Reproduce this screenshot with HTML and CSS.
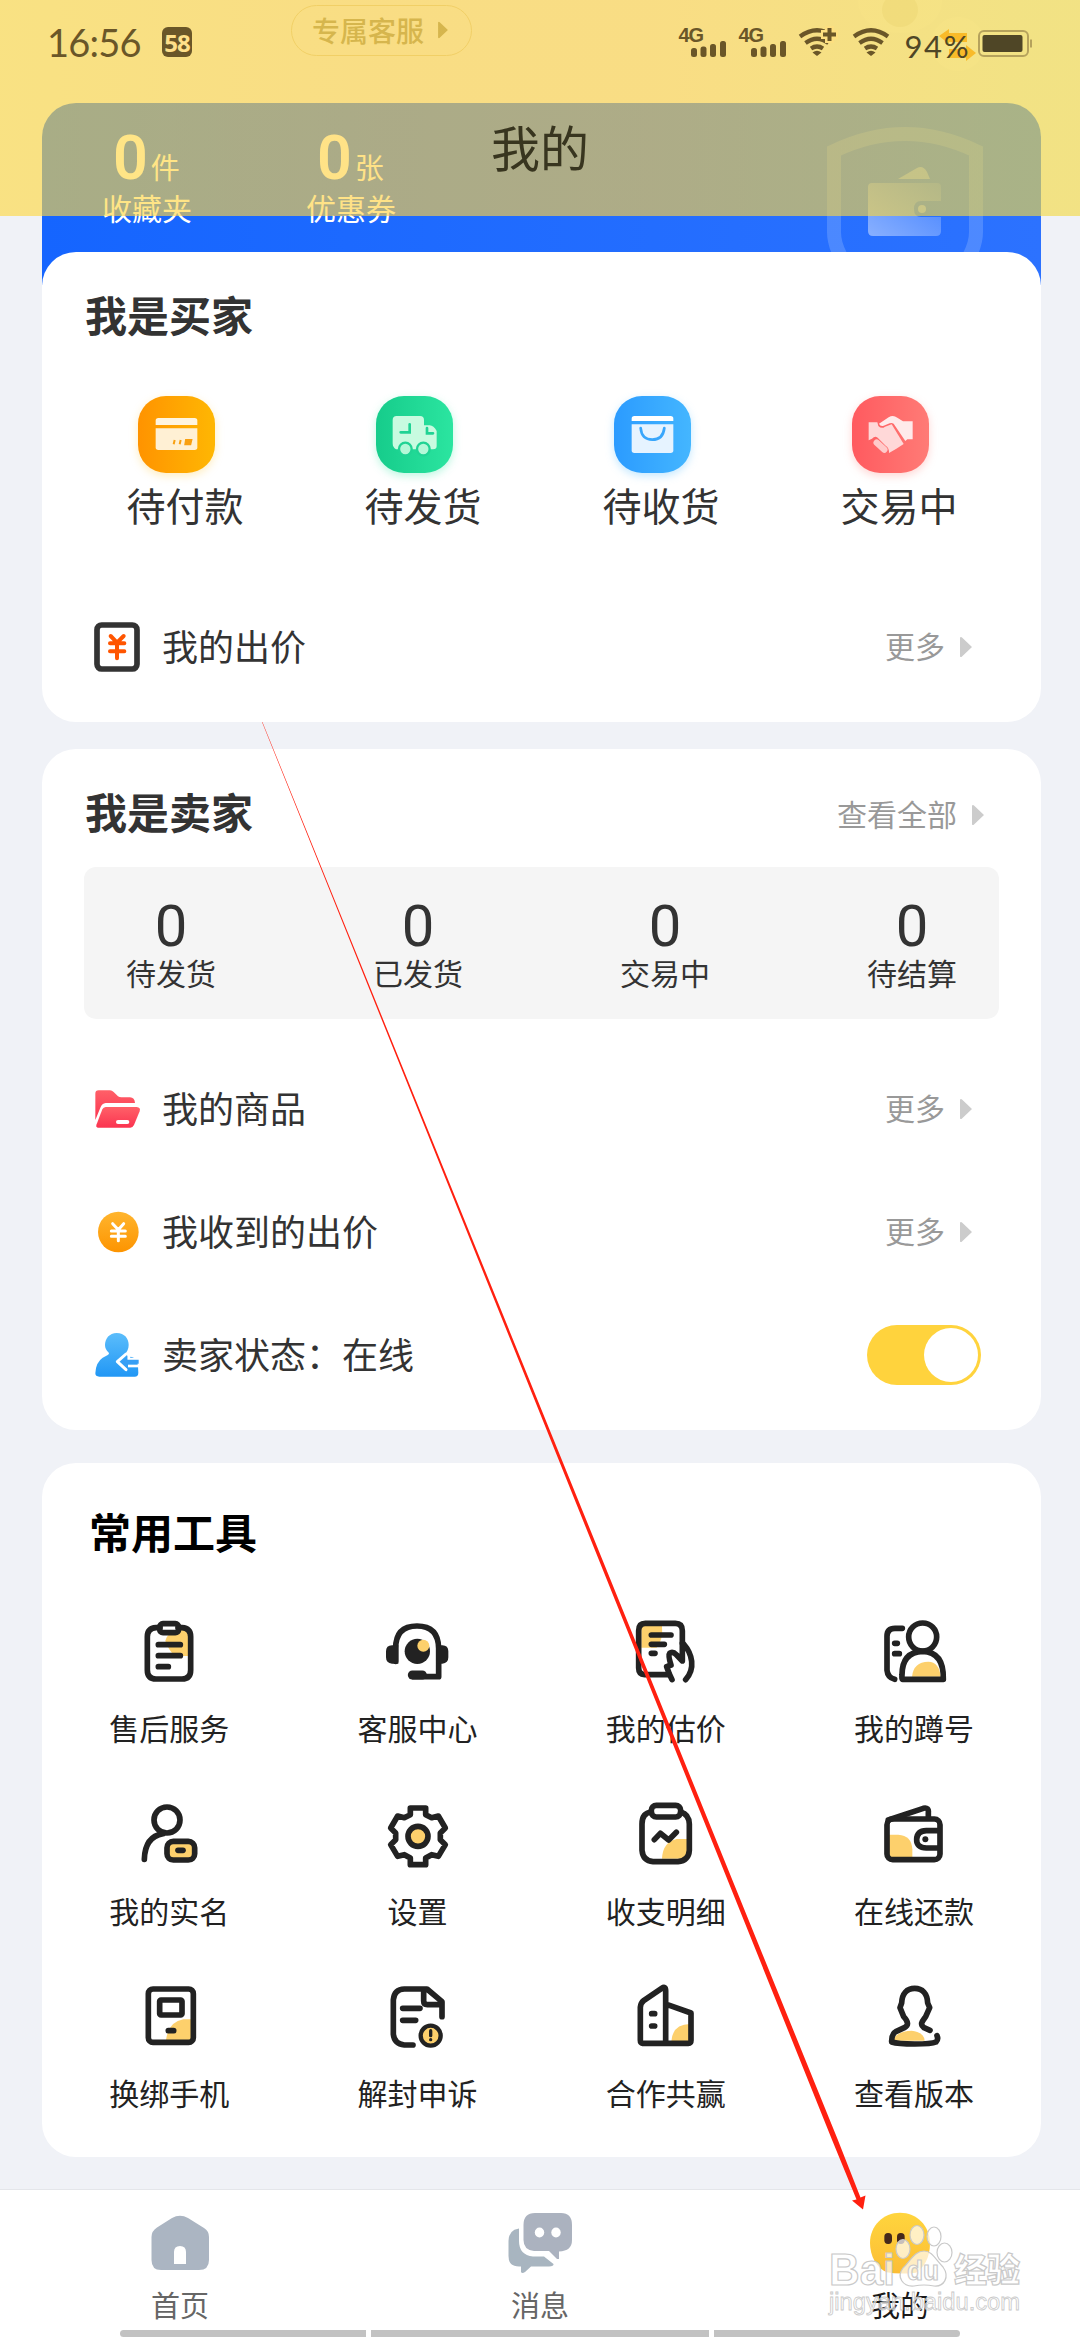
FILE: index.html
```html
<!DOCTYPE html>
<html lang="zh-CN">
<head>
<meta charset="utf-8">
<title>我的</title>
<link rel="stylesheet" href="styles.css">
</head>
<body>
<svg class="defs" width="0" height="0">
  <defs>
    <linearGradient id="gOrange"><stop offset="0" stop-color="#ff9300"/><stop offset="1" stop-color="#ffb703"/></linearGradient>
    <linearGradient id="gGreen"><stop offset="0" stop-color="#16cc8b"/><stop offset="1" stop-color="#2be5a0"/></linearGradient>
    <linearGradient id="gBlue"><stop offset="0" stop-color="#2b9bff"/><stop offset="1" stop-color="#44b6ff"/></linearGradient>
    <linearGradient id="gRed"><stop offset="0" stop-color="#ff5a5f"/><stop offset="1" stop-color="#ff7b76"/></linearGradient>
    <linearGradient id="gFolder" x2="0" y2="1"><stop offset="0" stop-color="#ff6068"/><stop offset="1" stop-color="#fb3450"/></linearGradient>
    <linearGradient id="gCoin" x2="0" y2="1"><stop offset="0" stop-color="#ffb52e"/><stop offset="1" stop-color="#fd9400"/></linearGradient>
    <linearGradient id="gUser" x2="0" y2="1"><stop offset="0" stop-color="#5bbdfb"/><stop offset="1" stop-color="#2197f5"/></linearGradient>
    <linearGradient id="gFace" x2="0" y2="1"><stop offset="0" stop-color="#ffd53d"/><stop offset="1" stop-color="#fcbd35"/></linearGradient>
    <linearGradient id="gPlate" x1="0" y1="1" x2="1" y2="0"><stop offset="0" stop-color="#fff" stop-opacity=".45"/><stop offset="1" stop-color="#fff" stop-opacity=".12"/></linearGradient>
    <symbol id="next" viewBox="0 0 12 22"><path d="M0 1.500V20.500Q1 21.500 2 20.500L12 11 2 1.500Q1 .5 0 1.500Z" fill="currentColor"/></symbol>
  </defs>
</svg>

<div class="content">
  <div class="service-strip">
    <div class="pill">专属客服<svg class="next"><use href="#next"/></svg></div>
    <svg class="mascot" width="150" height="80" viewBox="0 0 150 80">
      <ellipse cx="51" cy="2" rx="42" ry="31" fill="#fff" opacity=".3"/>
      <ellipse cx="51" cy="10" rx="18" ry="17" fill="#cfc9b4" opacity=".35"/>
      <circle cx="109" cy="44" r="27" fill="#fff" opacity=".35"/>
      <path d="M90 36L100 29V33H118V42H100V44ZM127 53L117 45V49H100V58H117V61Z" fill="#ff8a00"/>
    </svg>
  </div>

  <section class="assets">
    <div class="asset"><p><b>0</b>件</p><span>收藏夹</span></div>
    <div class="asset"><p><b>0</b>张</p><span>优惠券</span></div>
    <svg class="shield" width="160" height="150" viewBox="823 103 160 150">
      <path d="M843 262Q833 246 833 232V151Q904 117 975 151V232Q975 246 965 262" fill="none" stroke="#8fb6ff" stroke-opacity=".35" stroke-width="14"/>
      <path d="M897 179L916 168Q922 165 926 172L929 179Z" fill="#fff" opacity=".35"/>
      <path d="M871 183H936Q940 183 940 187V201H920Q913 201 913 209T920 217H940V231Q940 236 935 236H872Q867 236 867 231V187Q867 183 871 183Z" fill="url(#gPlate)"/>
      <circle cx="921" cy="209" r="4" fill="#fff" opacity=".4"/>
    </svg>
  </section>

  <section class="card buyer">
    <h2>我是买家</h2>
    <div class="orders">
      <div class="order">
        <svg class="o-orange" viewBox="291 78 231 231"><rect x="291" y="78" width="231" height="231" rx="84" fill="url(#gOrange)"/><path d="M344 165V152Q344 144 352 144H461Q469 144 469 152V165Z" fill="#fff4df"/><path d="M344 175H469V232Q469 240 461 240H352Q344 240 344 232Z" fill="#fff0d4"/><path d="M401 210L398 223M419 210L416 223M435 210H451L448 223H433Z" stroke="#f9a010" stroke-width="6" fill="#f9a010"/></svg>
        <span>待付款</span>
      </div>
      <div class="order">
        <svg class="o-green" viewBox="1005 78 231 231"><rect x="1005" y="78" width="231" height="231" rx="84" fill="url(#gGreen)"/><path d="M1067 138H1137Q1149 138 1149 150V166H1166Q1178 167 1187 183V228Q1187 238 1176 238H1065Q1055 232 1055 220V150Q1055 138 1067 138Z" fill="#c8fbe0"/><path d="M1106 163V187H1079M1158 174V190H1176" stroke="#20d394" stroke-width="8" fill="none" stroke-linecap="round"/><circle cx="1093" cy="237" r="19" fill="#b4f8d8" stroke="#20d394" stroke-width="7"/><circle cx="1147" cy="237" r="19" fill="#b4f8d8" stroke="#20d394" stroke-width="7"/></svg>
        <span>待发货</span>
      </div>
      <div class="order">
        <svg class="o-blue" viewBox="219 78 231 231"><rect x="219" y="78" width="231" height="231" rx="84" fill="url(#gBlue)"/><path d="M272 153V146Q272 138 280 138H389Q397 138 397 146V153Z" fill="#fff"/><path d="M272 163H397V241Q397 249 389 249H280Q272 249 272 241Z" fill="#e6f3ff"/><path d="M299 174Q302 209 334 209T370 174" stroke="#38a6fc" stroke-width="8" fill="none" stroke-linecap="round"/></svg>
        <span>待收货</span>
      </div>
      <div class="order">
        <svg class="o-red" viewBox="933 78 231 231"><rect x="933" y="78" width="231" height="231" rx="84" fill="url(#gRed)"/><path d="M983 157H1009L1012 168Q1022 178 1032 170L1052 163L1088 222Q1066 237 1044 249Q1045 234 1034 227L1010 203Q1002 196 993 206L983 211Z" fill="#ffd8d8"/><path d="M1014 161L1043 142Q1056 134 1069 143L1086 154H1115V208H1099L1093 213L1058 161Q1052 157 1046 160L1028 167Q1018 170 1014 161Z" fill="#ffeaea"/><path d="M1007 218L1030 239" stroke="#ffcaca" stroke-width="19" stroke-linecap="round"/></svg>
        <span>交易中</span>
      </div>
    </div>
    <div class="row">
      <svg class="row-icon" viewBox="162 741 144 180"><rect x="171" y="765" width="120" height="132" rx="14" fill="none" stroke="#333" stroke-width="17"/><path d="M212 798L231 818 251 798M231 820V865M210 820H253M210 844H253" stroke="#ff5500" stroke-width="12" fill="none" stroke-linecap="round"/></svg>
      <span class="row-name">我的出价</span><span class="more">更多</span><svg class="next"><use href="#next"/></svg>
    </div>
  </section>

  <section class="card seller">
    <div class="head"><h2>我是卖家</h2><span class="more">查看全部</span><svg class="next"><use href="#next"/></svg></div>
    <div class="stats">
      <div><b>0</b><span>待发货</span></div>
      <div><b>0</b><span>已发货</span></div>
      <div><b>0</b><span>交易中</span></div>
      <div><b>0</b><span>待结算</span></div>
    </div>
    <div class="row">
      <svg class="row-icon" viewBox="102 57 144 180"><path d="M106 180V101Q106 91 116 91H150Q156 91 161 96L174 109Q178 112 184 112H210Q224 113 225 129H137Q126 131 122 141Z" fill="url(#gFolder)"/><path d="M137 141H230Q243 142 239 154L222 195Q218 203 211 203H113Q107 202 109 195L127 148Q130 142 137 141Z" fill="url(#gFolder)"/><rect x="168" y="180" width="40" height="12" rx="6" fill="#fff"/></svg>
      <span class="row-name">我的商品</span><span class="more">更多</span><svg class="next"><use href="#next"/></svg>
    </div>
    <div class="row">
      <svg class="row-icon" viewBox="102 426 144 180"><circle cx="175" cy="516" r="61" fill="url(#gCoin)"/><path d="M158 491L175 509 191 491M175 510V542M154 513H196M154 529H196" stroke="#fff" stroke-width="9" fill="none" stroke-linecap="round"/></svg>
      <span class="row-name">我收到的出价</span><span class="more">更多</span><svg class="next"><use href="#next"/></svg>
    </div>
    <div class="row">
      <svg class="row-icon" viewBox="102 795 144 180"><path d="M170 819C194 819 206 836 206 855C206 866 201 876 194 883C207 888 224 893 230 900Q235 915 235 938Q235 950 224 950H118Q106 950 106 940Q107 907 128 893L142 886Q150 882 145 877C139 871 135 864 135 855C135 836 148 819 170 819Z" fill="url(#gUser)"/><path d="M206 886L240 886V898H206ZM198 882L172 905 198 929" fill="none" stroke="#fff" stroke-width="9" stroke-linejoin="round" stroke-linecap="round"/><path d="M202 887L183 905 202 923V911H236V899H202Z" fill="#379ff5"/><path d="M204 918H238" stroke="#fff" stroke-width="8"/></svg>
      <span class="row-name">卖家状态：在线</span><span class="switch"><i></i></span>
    </div>
  </section>

  <section class="card tools">
    <h2>常用工具</h2>
    <div class="grid">
      <div class="tool">
        <svg viewBox="219 375 216 216"><path class="y" d="M385 498H345Q325 480 316 452Q320 430 352 420H385Z"/><path d="M300 413H288Q262 415 262 440V540Q262 567 288 567H366Q392 567 392 540V440Q392 415 366 413H354"/><rect x="299" y="401" width="57" height="27" rx="10"/><path d="M295 464H361M295 497H361M295 530H325"/></svg>
        <span>售后服务</span>
      </div>
      <div class="tool">
        <svg viewBox="964 375 216 216"><circle class="k" cx="1073" cy="484" r="38"/><circle class="y" cx="1091" cy="467" r="18"/><path d="M1008 514V475Q1008 408 1072 408T1137 475V560H1062"/><path class="k" d="M1016 466V521H997Q979 520 979 502V484Q979 466 997 466ZM1129 466V521H1148Q1166 520 1166 502V484Q1166 466 1148 466Z"/><path d="M1058 555H1088" stroke-width="27"/></svg>
        <span>客服中心</span>
      </div>
      <div class="tool">
        <svg viewBox="210 105 216 216"><path class="y" d="M244 137H306Q310 180 290 203H244Z"/><path d="M322 284H254Q236 283 236 264V152Q236 130 256 130H346Q367 130 367 152V190"/><path d="M274 165H333M274 193H313M274 220H285"/><path d="M367 190V243L350 225Q338 213 329 220Q324 226 333 255L320 260 328 282 336 299M371 192C397 222 407 265 377 299"/></svg>
        <span>我的估价</span>
      </div>
      <div class="tool">
        <svg viewBox="954 105 216 216"><path class="y" d="M1056 290Q1060 246 1105 245Q1138 246 1142 290Z"/><circle cx="1088" cy="171" r="42"/><path d="M1028 298H1150Q1152 216 1088 214Q1026 216 1026 285Q1025 298 1028 298ZM1027 145H1005Q981 145 981 169V271Q983 293 1004 298M1004 190H1012M1004 221H1018"/></svg>
        <span>我的蹲号</span>
      </div>
      <div class="tool">
        <svg viewBox="219 54 216 216"><circle cx="321" cy="120" r="39"/><path d="M253 238Q255 170 309 161"/><rect x="321" y="184" width="83" height="56" rx="19" fill="#fdd06c"/><path d="M354 211H369"/></svg>
        <span>我的实名</span>
      </div>
      <div class="tool">
        <svg viewBox="964 54 216 216"><path d="M1052 84H1098V104L1116 113L1136 108L1157 144L1142 159V179L1157 194L1136 229L1116 224L1098 234V254H1052V234L1034 224L1014 229L993 194L1008 179V159L993 144L1014 108L1034 113L1052 104Z"/><circle cx="1075" cy="169" r="30" fill="#fdd06c"/></svg>
        <span>设置</span>
      </div>
      <div class="tool">
        <svg viewBox="210 54 216 216"><path class="y" d="M306 236Q308 186 350 177H382V236Z"/><path d="M274 96Q246 99 246 132V211Q249 243 279 245H354Q386 242 388 211V132Q387 103 362 96"/><rect x="274" y="76" width="88" height="35" rx="15"/><path d="M283 179L301 160 326 180 349 157"/></svg>
        <span>收支明细</span>
      </div>
      <div class="tool">
        <svg viewBox="954 54 216 216"><path class="y" d="M986 164H1015Q1055 166 1057 208V238H986Z"/><rect x="981" y="117" width="159" height="122" rx="17"/><path d="M985 120L1090 85Q1107 81 1105 99V114M1136 152H1099Q1071 153 1070 178T1099 204H1136"/><circle class="k" cx="1096" cy="178" r="9"/></svg>
        <span>在线还款</span>
      </div>
      <div class="tool">
        <svg viewBox="219 600 216 216"><path class="y" d="M318 780Q326 725 370 718H396V780Z"/><rect x="265" y="627" width="135" height="160" rx="14"/><rect x="299" y="660" width="67" height="45" rx="4"/><path d="M325 752H341"/></svg>
        <span>换绑手机</span>
      </div>
      <div class="tool">
        <svg viewBox="964 600 216 216"><path d="M1060 795H1034Q1004 792 1001 763V659Q1004 628 1034 627H1102L1147 665V710M1092 630V663Q1092 674 1103 674H1145M1029 685H1081M1029 721H1068"/><circle cx="1113" cy="767" r="30" fill="#fdd06c" stroke-width="13"/><path d="M1113 752V767" stroke-width="10"/><circle class="k" cx="1113" cy="779" r="5"/></svg>
        <span>解封申诉</span>
      </div>
      <div class="tool">
        <svg viewBox="210 600 216 216"><path class="y" d="M334 784Q338 732 390 732V784Z"/><path d="M318 790H248Q241 789 241 781V682Q242 669 252 661L305 625Q317 617 317 632V790H385Q393 790 393 781V699L320 673M275 701H284M275 738H284"/></svg>
        <span>合作共赢</span>
      </div>
      <div class="tool">
        <svg viewBox="954 600 216 216"><path class="y" d="M999 782Q1008 754 1055 752Q1092 756 1094 782Z"/><path d="M1110 751L1092 743C1078 732 1087 724 1097 710L1109 683L1103 669C1102 640 1087 625 1064 625S1026 640 1025 669L1020 683L1031 710C1046 726 1046 736 1033 743L1009 754Q994 762 995 786C1020 794 1110 794 1128 786Q1136 779 1131 767"/></svg>
        <span>查看版本</span>
      </div>
    </div>
  </section>
</div>

<nav class="tabs">
  <div class="tab"><svg viewBox="144 2207 72 72"><path fill="#abb5c2" fill-rule="evenodd" d="M172 2218Q180 2213.500 188 2218L204 2228Q209 2231 209 2237V2260Q209 2270 199 2270H161Q151.500 2270 151.500 2260V2237Q151.500 2231 157 2227.500ZM174 2264H186V2252Q186 2246 180 2246T174 2252Z"/></svg><span>首页</span></div>
  <div class="tab"><svg viewBox="504 2207 72 72"><path fill="#a8b5c0" d="M519 2228.500Q508.500 2230 508.500 2241V2256Q508.500 2266.500 519 2266.500H521V2272Q522 2274 525 2272L531 2266.500H549Q554 2266 553.500 2264L544 2256.500H533Q519 2255 519 2241Z"/><path fill="#abb2bf" d="M535 2213H561Q572 2213 572 2225V2240Q572 2251 559 2251.500V2259L557 2259 549 2251H534Q523.500 2250 523.500 2240V2225Q523.500 2213 535 2213Z"/><ellipse cx="539.500" cy="2232.500" rx="4.700" ry="5" fill="#fff"/><ellipse cx="556" cy="2232.500" rx="4.700" ry="5" fill="#fff"/></svg><span>消息</span></div>
  <div class="tab active"><svg viewBox="312 201 216 216"><path d="M420 218C470 218 510 257 510 310C510 355 490 385 468 398Q420 404 380 397C350 382 330 350 330 308C330 257 370 218 420 218Z" fill="url(#gFace)"/><rect x="373" y="279" width="23" height="33" rx="11" fill="#45291b"/><rect x="411" y="279" width="23" height="33" rx="11" fill="#45291b"/></svg><span>我的</span></div>
</nav>
<div class="gesture"><i></i><i></i><i></i></div>

<header class="topbar">
  <div class="status">
    <span class="clock">16:56</span><span class="badge">58</span>
    <svg class="signals" width="360" height="44" viewBox="675 20 360 44">
      <g fill="#6a5628">
        <g id="cell"><text x="678.500" y="42" class="net">4G</text><rect x="691" y="48" width="6" height="9" rx="2.500"/><rect x="700.500" y="46.500" width="6" height="10.500" rx="2.500"/><rect x="710" y="44" width="6" height="13" rx="2.500"/><rect x="720" y="41" width="6" height="16" rx="2.500"/></g>
        <use href="#cell" x="60"/>
        <g id="wifi" fill="none" stroke="#6a5628" stroke-width="4.200"><path d="M854 36.500Q871 24 888 36.500M859.500 43Q871 34.500 882.500 43M865 48.500Q871 44.500 877 48.500"/><path d="M871 56L866.500 52.500Q871 49 875.500 52.500Z" fill="#6a5628" stroke="none"/></g>
        <use href="#wifi" x="-54"/>
        <path d="M829.500 26V43M821 34.500H838" stroke="#fddf80" stroke-width="9"/>
        <path d="M829.500 28V41M823 34.500H836" stroke="#6a5628" stroke-width="4"/>
      </g>
      <text x="904.500" y="57.500" class="percent" textLength="64">94%</text>
      <rect x="979" y="31" width="49" height="25" rx="5" fill="none" stroke="#b5a25c" stroke-width="2"/>
      <rect x="982.500" y="35" width="40" height="17" rx="2" fill="#4f4626"/>
      <path d="M1031 39.500V47.500" stroke="#b5a25c" stroke-width="2"/>
    </svg>
  </div>
  <h1>我的</h1>
</header>

<svg class="pointer" width="1080" height="2340" viewBox="0 0 1080 2340"><path d="M262 722H262.400L837.500 2139 860.500 2197.500 865.500 2195.500 863 2209.500 852 2200.500 856.500 2199.500 832.500 2141Z" fill="#ff2010"/></svg>

<div class="watermark">
  <svg width="202" height="106" viewBox="0 0 202 106">
    <g class="paw"><ellipse cx="90" cy="19" rx="7" ry="9.500"/><ellipse cx="107" cy="20.500" rx="7" ry="9.500"/><ellipse cx="76" cy="33" rx="7" ry="9.500"/><ellipse cx="117.500" cy="36.500" rx="7.500" ry="9.500"/><path d="M97 35C105 35 108 43 116 51C123 61 117 71 107 70Q97 68 87 70C76 71 69 61 76 52C84 44 88 35 97 35Z"/></g>
    <text class="logo" x="2" y="69" textLength="66" lengthAdjust="spacingAndGlyphs">Bai</text>
    <text class="du" x="80" y="64" textLength="32" lengthAdjust="spacingAndGlyphs">du</text>
    <text class="cn" x="127" y="66">经验</text>
    <text class="url" x="2" y="94" textLength="191" lengthAdjust="spacingAndGlyphs">jingyan.baidu.com</text>
  </svg>
</div>
</body>
</html>
```

FILE: styles.css
```css
* { box-sizing: border-box; }

body {
  margin: 0;
  position: relative;
  width: 1080px;
  height: 2340px;
  overflow: hidden;
  display: flex;
  flex-direction: column;
  background: #f0f2f7;
  color: #333;
  font-family: "Noto Sans CJK SC", "Noto Sans", sans-serif;
  font-size: 30px;
}

h1, h2, p { margin: 0; font-weight: normal; }
.defs { position: absolute; }
.content { height: 2189px; padding: 0 39px 0 42px; }

/* Scrolled content that sits behind the top bar */
.service-strip { height: 103px; display: flex; justify-content: space-between; padding: 5px 0 0 249px; }
.pill {
  width: 181px; height: 51px; padding: 0 0 2px 20px;
  display: flex; align-items: center; gap: 14px;
  border: 1px solid #d8cba6; border-radius: 26px;
  color: #8f8662; font-size: 28px; font-weight: 500; white-space: nowrap;
}
.pill .next { width: 10px; height: 18px; color: #8f8662; }
.mascot { margin: -5px 42px 0 0; width: 150px; height: 80px; }

.assets {
  position: relative;
  height: 149px;
  margin-bottom: -33px;
  box-sizing: content-box;
  padding-bottom: 33px;
  border-radius: 34px 34px 0 0;
  background: linear-gradient(90deg, #1565ff, #2c72ff);
  display: flex;
  overflow: hidden;
  color: #fff;
}
.asset { width: 90px; margin: 25px 0 0 60px; }
.asset + .asset { margin-left: 114px; }
.asset p { height: 60px; line-height: 60px; padding-left: 11px; white-space: nowrap; font-size: 29px; }
.asset b { font: 600 61px/60px Roboto, sans-serif; margin-right: 3px; }
.asset span { display: block; line-height: 40px; margin-top: -1px; white-space: nowrap; }
.shield { position: absolute; right: 57px; top: 0; }

.card { position: relative; border-radius: 34px; background: #fff; }
.card h2 { font-size: 42px; line-height: 60px; font-weight: 700; padding-left: 43px; }
.buyer { height: 470px; padding-top: 32px; }
.orders { display: grid; grid-template-columns: repeat(4, 238px); margin-top: 52px; padding-left: 24px; }
.order { display: flex; flex-direction: column; align-items: center; gap: 4px; }
.order svg { width: 77px; height: 77px; margin-right: 18px; }
.order span { font-size: 39px; line-height: 54px; }
.o-orange { filter: drop-shadow(0 3px 4px #ffb70340); }
.o-green { filter: drop-shadow(0 3px 4px #2be5a050); }
.o-blue { filter: drop-shadow(0 3px 4px #44b6ff50); }
.o-red { filter: drop-shadow(0 3px 4px #ff7b7650); }

.row { height: 123px; display: flex; align-items: center; padding: 0 69px 0 52px; }
.buyer .row { margin-top: 54px; }
.row-icon { width: 48px; height: 60px; flex: none; }
.row-name { margin-left: 20px; padding-bottom: 4px; font-size: 36px; flex: 1; }
.more { color: #999; margin-right: 15px; }
.row .more { padding-bottom: 4px; }
.next { width: 12px; height: 22px; color: #ccc; flex: none; }

.seller { margin-top: 27px; height: 681px; padding-top: 34px; }
.head { display: flex; align-items: center; padding-right: 57px; }
.head h2 { flex: 1; margin-top: -2px; padding-bottom: 2px; }
.head .next { margin-top: 4px; }
.stats {
  display: flex; justify-content: space-between;
  height: 152px; margin: 24px 42px 28px; padding: 29px 42px 0;
  border-radius: 12px; background: #f5f5f5;
}
.stats div { display: flex; flex-direction: column; align-items: center; }
.stats b { font: 400 58px/60px Roboto, sans-serif; }
.stats span { line-height: 40px; margin-top: -4px; }
.seller .row:last-child { padding-right: 60px; }
.switch { width: 114px; height: 60px; padding: 3px; display: flex; justify-content: flex-end; border-radius: 30px; background: #ffd33d; }
.switch i { width: 54px; height: 54px; border-radius: 50%; background: #fff; }

.tools { margin-top: 33px; height: 694px; padding-top: 38px; color: #222; }
.tools h2 { padding-left: 47px; color: #000; }
.grid { display: grid; grid-template-columns: repeat(4, 248.3px); row-gap: 49.5px; margin-top: 54px; padding-left: 3px; }
.tool { display: flex; flex-direction: column; align-items: center; gap: 19px; line-height: 42px; }
.tool svg { width: 72px; height: 72px; fill: none; stroke: #222; stroke-width: 17; stroke-linecap: round; stroke-linejoin: round; }
.tool .y { fill: #fdd06c; stroke: none; }
.tool .k { fill: #222; stroke: none; }

.tabs { height: 151px; display: flex; background: #fff; border-top: 1px solid #e4e6ea; color: #666; }
.tab { flex: 1; padding-top: 17px; display: flex; flex-direction: column; align-items: center; gap: 7px; font-size: 29px; line-height: 36px; }
.tab svg { width: 72px; height: 72px; }
.active { color: #1a1a1a; }

.gesture { position: absolute; left: 120px; top: 2330px; width: 840px; height: 7px; display: flex; justify-content: space-between; }
.gesture i { width: 246px; background: #c2c2c2; border-radius: 4px 0 0 4px; }
.gesture i:nth-child(2) { width: 338px; border-radius: 0; }
.gesture i:nth-child(3) { border-radius: 0 4px 4px 0; }

/* Translucent bar over the scrolled page */
.topbar {
  position: absolute; inset: 0 0 auto; height: 216px;
  background: linear-gradient(90deg, #ffd83fa1, #ffd141a1 35%, #ffd141a1 60%, #f3d941a1 95%);
  text-align: center;
}
.status { height: 103px; display: flex; align-items: flex-start; padding: 20px 45px 0 47px; color: #6a5628; }
.clock { font: 400 38px/44px Lato, sans-serif; width: 115px; text-align: left; letter-spacing: -.8px; }
.badge { width: 30px; height: 30px; margin-top: 7px; border-radius: 6px; background: #6a5628; color: #ffe08a; font: 700 24px/31px "Open Sans", sans-serif; letter-spacing: -1px; }
.signals { margin-left: auto; }
.net { font: 700 20px "Liberation Sans", sans-serif; letter-spacing: -1px; }
.percent { font: 400 31px Lato, sans-serif; fill: #4f4626; }
.topbar h1 { font-size: 49px; line-height: 60px; margin-top: 13px; color: #38351f; }

.pointer { position: absolute; left: 0; top: 0; }

.watermark { position: absolute; left: 827px; top: 2216px; }
.watermark text, .paw { fill: #fff; fill-opacity: .7; stroke: #c9c9c9; stroke-width: 1.2; }
.logo { font: 700 45px "Liberation Sans", sans-serif; }
.du { font: 700 27px "Liberation Sans", sans-serif; }
.cn { font: 900 33px "Noto Sans CJK SC", sans-serif; }
.watermark .url { font: 400 23px "Liberation Sans", sans-serif; stroke-width: .8; fill-opacity: .6; }
```
